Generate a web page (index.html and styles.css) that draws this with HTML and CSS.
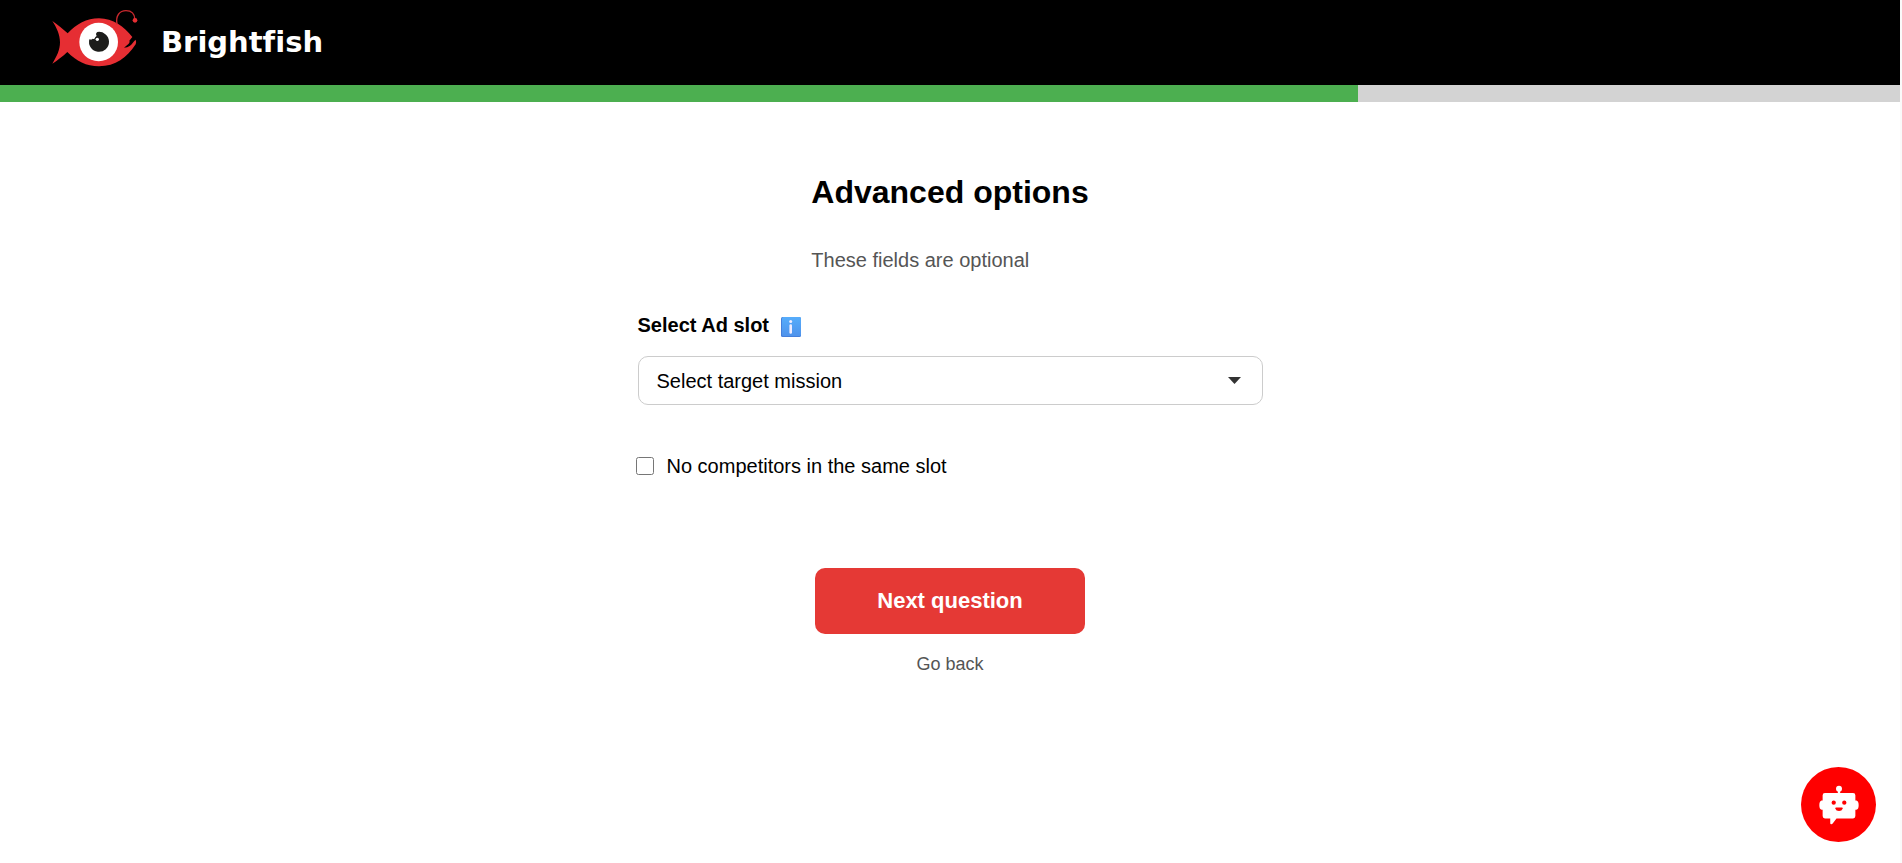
FILE: index.html
```html
<!DOCTYPE html>
<html lang="en">
<head>
<meta charset="utf-8">
<meta name="viewport" content="width=device-width, initial-scale=1">
<title>Brightfish – Advanced options</title>
<link rel="stylesheet" href="styles.css">
</head>
<body>
<header class="site-header">
  <svg class="logo" viewBox="60 25 270 207" aria-hidden="true">
    <path fill="#e62e33" d="M67 64C82 74 98 87 113 101C139 73 170 56 207 56C249 56 283 82 307 112L298 123Q302 129 289 138L282 144Q292 144 300 138C308 132 311 124 317 120Q320 127 317 134C291 174 257 200 207 200C169 200 139 184 112 157C98 170 84 181 67 192C80 171 90 151 90 128C90 105 80 84 67 64Z"/>
    <path fill="none" stroke="#c9282d" stroke-width="4" d="M261 74C256 48 269 33 288 33C306 33 314 43 315 60"/>
    <circle cx="315" cy="62" r="7" fill="#e62e33"/>
    <circle cx="206" cy="127" r="58" fill="#fff"/>
    <path fill="#1d1d1b" d="M202 97A30 30 0 1 1 178 119Q185 121 188 117Q194 120 196 112Q202 110 198 104Q198 99 202 97Z"/>
    <circle cx="202" cy="119" r="5" fill="#fff"/>
  </svg>
  <span class="brand">Brightfish</span>
</header>
<div class="progress" role="progressbar" aria-label="Progress" aria-valuemin="0" aria-valuemax="7" aria-valuenow="5">
  <div class="progress-fill" style="width: 71.45%"></div>
</div>
<main class="content">
  <div class="intro">
    <h1 class="title">Advanced options</h1>
    <p class="subtitle">These fields are optional</p>
  </div>
  <form class="form">
    <div class="label-row">
      <label class="label" for="slot">Select Ad slot</label>
      <svg class="info" viewBox="0 0 20 20" role="img" aria-label="Information">
        <defs>
          <linearGradient id="info-fill" x1="0" y1="0" x2="0" y2="1">
            <stop offset="0" stop-color="#56adfb"/>
            <stop offset="1" stop-color="#4f93ec"/>
          </linearGradient>
        </defs>
        <rect width="20" height="20" rx="1.5" fill="#457fdb"/>
        <rect x="1" width="19" height="19" rx="1.5" fill="url(#info-fill)"/>
        <circle cx="9.7" cy="4.5" r="1.5" fill="#f1edff"/>
        <rect x="8.4" y="7.3" width="2.6" height="9.4" rx="1.2" fill="#f1edff"/>
      </svg>
    </div>
    <div class="select-wrap">
      <select class="select" id="slot">
        <option>Select target mission</option>
      </select>
      <svg class="arrow" viewBox="0 0 13 7" aria-hidden="true"><path d="M0 0H13L6.5 7Z" fill="#333"/></svg>
    </div>
    <div class="check-row">
      <input class="checkbox" type="checkbox" id="competitors">
      <label for="competitors">No competitors in the same slot</label>
    </div>
    <div class="actions">
      <button class="next" type="button">Next question</button>
      <a class="back" href="#">Go back</a>
    </div>
  </form>
</main>
<button class="chat" type="button" aria-label="Open chat">
  <svg class="bot" viewBox="115 103 121 121" aria-hidden="true">
    <circle cx="175.500" cy="114" r="9" fill="#fff"/>
    <path fill="#fff" d="M172 116H179V127H218Q225 127 225 134V150H228Q235 152 235 164Q235 176 228 178H225V197Q225 204 218 204H168L157 219Q155 222 152 222Q149 222 149 219V204H133Q126 204 126 197V178H123Q116 176 116 164Q116 152 123 150H126V134Q126 127 133 127H172Z"/>
    <circle cx="159.500" cy="156.500" r="6.500" fill="#f00"/>
    <circle cx="191.500" cy="156.500" r="6.500" fill="#f00"/>
    <path fill="#f00" d="M164 174Q164 171 167 171H184Q187 171 187 174Q184 182 175.500 182Q167 182 164 174Z"/>
  </svg>
</button>
</body>
</html>
```
FILE: styles.css
```css
* {
  box-sizing: border-box;
}

body {
  margin: 0;
  min-height: 100vh;
  border-right: 2px solid #fafafa;
  background: #fff;
  color: #000;
  font-family: "Liberation Sans", Arial, sans-serif;
  font-size: 20px;
  line-height: 24px;
}

.site-header {
  display: flex;
  align-items: center;
  gap: 21px;
  padding: 8px 50px;
  background: #000;
}

.logo {
  width: 90px;
  height: 69px;
}

.brand {
  padding-bottom: 2px;
  color: #fff;
  font-family: "DejaVu Sans", sans-serif;
  font-size: 29px;
  font-variant-ligatures: none;
  font-weight: 700;
  line-height: 34px;
}

.progress {
  height: 17px;
  background: #d3d3d3;
}

.progress-fill {
  height: 100%;
  background: #4caf50;
}

.content {
  display: flex;
  flex-direction: column;
  align-items: center;
  padding: 70px 16px 40px;
}

.title {
  margin: 0 0 36px;
  font-size: 32px;
  line-height: 40px;
}

.subtitle {
  margin: 0 0 41px;
  color: #555;
}

.form {
  width: 100%;
  max-width: 625px;
}

.label-row {
  display: flex;
  align-items: flex-end;
  gap: 12px;
  margin-bottom: 19px;
}

.label {
  font-weight: 700;
}

.info {
  width: 20px;
  height: 20px;
}

.select-wrap {
  position: relative;
  margin-bottom: 49px;
}

.select {
  display: block;
  width: 100%;
  height: 49px;
  padding: 0 40px 0 18px;
  border: 1px solid #ccc;
  border-radius: 10px;
  appearance: none;
  background: #fff;
  color: #000;
  font: inherit;
}

.arrow {
  position: absolute;
  top: 21px;
  right: 22px;
  width: 13px;
  height: 7px;
  pointer-events: none;
}

.check-row {
  display: flex;
  align-items: center;
  gap: 13px;
  margin: 0 0 90px -2px;
}

.checkbox {
  width: 18px;
  height: 18px;
  margin: 0;
}

.actions {
  display: flex;
  flex-direction: column;
  align-items: center;
  gap: 19px;
}

.next {
  padding: 20px 62px;
  border: 0;
  border-radius: 10px;
  background: #e53935;
  color: #fff;
  font: inherit;
  font-size: 22px;
  font-weight: 700;
  line-height: 26px;
}

.back {
  color: #555;
  font-size: 18px;
  line-height: 22px;
  text-decoration: none;
}

.chat {
  position: fixed;
  right: 26px;
  bottom: 21px;
  display: grid;
  place-items: center;
  width: 75px;
  height: 75px;
  padding: 0;
  border: 0;
  border-radius: 50%;
  background: #f00;
}

.bot {
  width: 40px;
  height: 40px;
}
```
